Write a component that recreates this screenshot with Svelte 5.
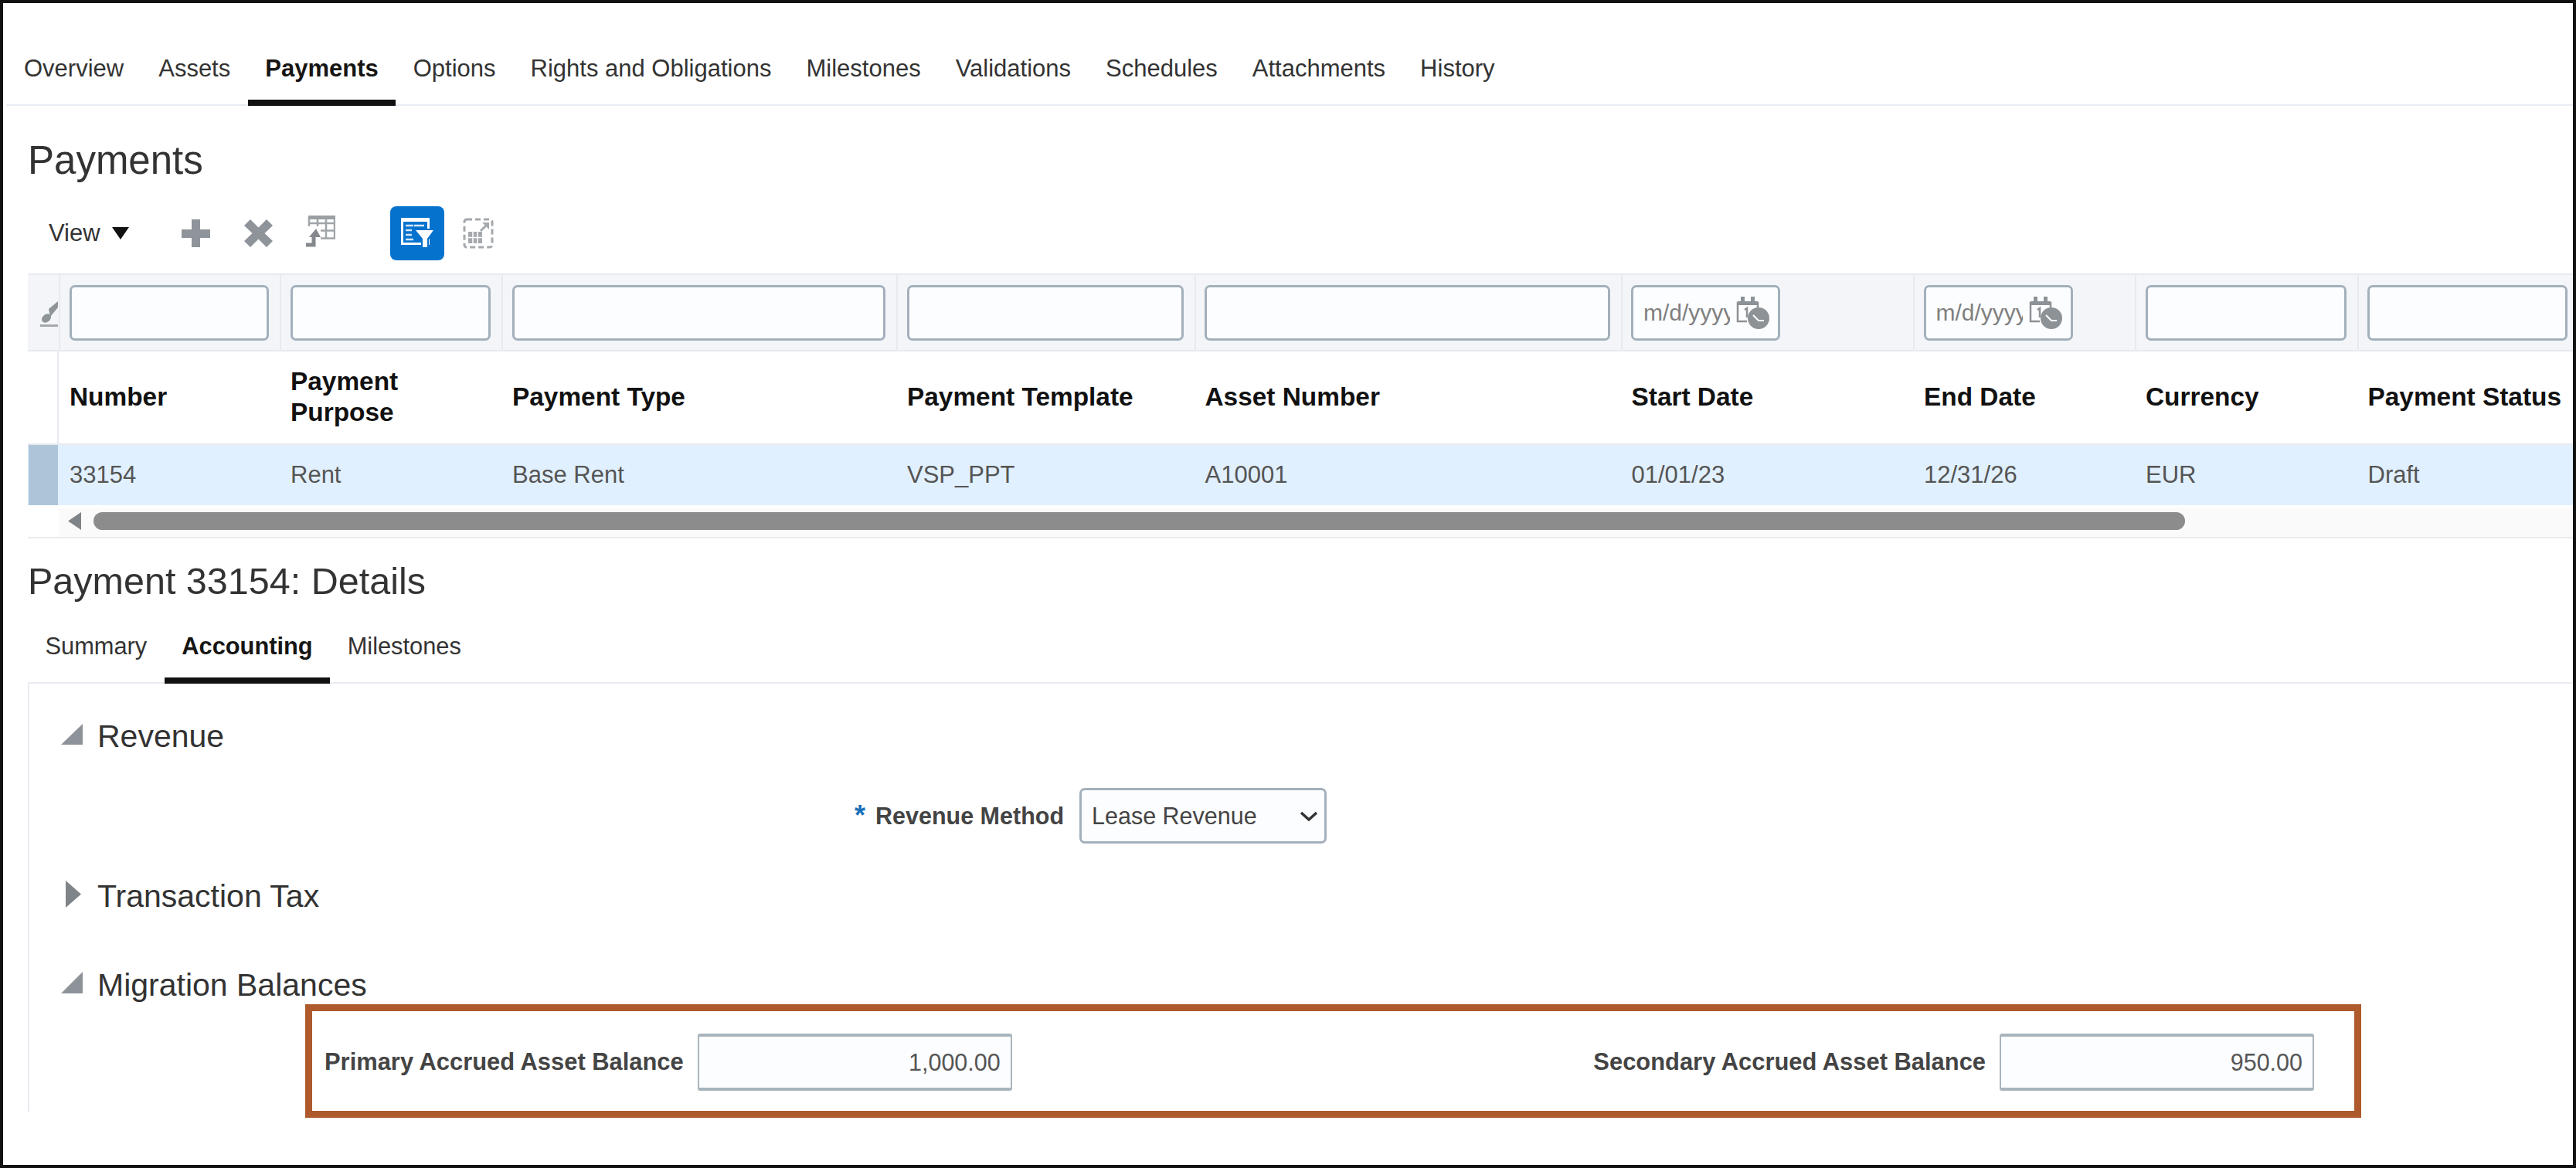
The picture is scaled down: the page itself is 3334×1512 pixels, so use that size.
<script>
	const filters = ['text', 'text', 'text', 'text', 'text', 'date', 'date', 'text', 'text'];
	const columns = [
		'Number',
		'Payment Purpose',
		'Payment Type',
		'Payment Template',
		'Asset Number',
		'Start Date',
		'End Date',
		'Currency',
		'Payment Status'
	];
	const row = ['33154', 'Rent', 'Base Rent', 'VSP_PPT', 'A10001', '01/01/23', '12/31/26', 'EUR', 'Draft'];
	const tabs = [
		'Overview',
		'Assets',
		'Payments',
		'Options',
		'Rights and Obligations',
		'Milestones',
		'Validations',
		'Schedules',
		'Attachments',
		'History'
	];
	const subTabs = ['Summary', 'Accounting', 'Milestones'];
</script>

<div class="frame">
	<nav class="tabs">
		{#each tabs as tab}
			<div class="tab" class:active={tab === 'Payments'}>{tab}</div>
		{/each}
	</nav>

	<main class="content">
		<h1 class="title">Payments</h1>

		<div class="toolbar">
			<span class="view">View</span>
			<svg class="caret" width="24" height="16" viewBox="0 0 24 16"><path d="M1 0H23L12 16Z" fill="#111" /></svg>
			<svg class="plus" width="37" height="36" viewBox="0 0 37 36">
				<path d="M13 0H24V13H37V24H24V36H13V24H0V13H13Z" fill="#8e9499" />
			</svg>
			<svg class="cross" width="37" height="36" viewBox="0 0 37 36">
				<path d="M8 0L18.500 10.500L29 0L37 8L26.500 18L37 28L29 36L18.500 25.500L8 36L0 28L10.500 18L0 8Z" fill="#8e9499" />
			</svg>
			<svg class="import" width="40" height="41" viewBox="0 0 40 41">
				<g fill="none" stroke="#a0a5a9" stroke-width="2.500">
					<rect x="6" y="1.500" width="33" height="28" />
					<path d="M6 10H39M6 19.500H39M17 1.500V29.500M28 1.500V29.500" />
				</g>
				<rect x="6" y="0" width="34" height="5" fill="#9a9fa3" />
				<rect x="2" y="14" width="19" height="27" fill="#fff" />
				<path d="M2 38H12V26" fill="none" stroke="#85898d" stroke-width="5" />
				<path d="M15 17L6 28H21Z" fill="#85898d" />
			</svg>
			<div class="filter-btn">
				<svg width="70" height="70" viewBox="0 0 70 70">
					<rect x="15.500" y="16.500" width="34" height="32" fill="none" stroke="#fff" stroke-width="3" />
					<rect x="14" y="15" width="37" height="5" fill="#fff" />
					<path d="M20 25H30M20 31H28M20 37H28M20 43H30M31 25H44" stroke="#d5e6f7" stroke-width="2.500" />
					<path d="M30 29H60L50 43V56H40V43Z" fill="#0572ce" />
					<path d="M33 31H56L48 42V53H42V42Z" fill="#fff" />
				</svg>
			</div>
			<svg class="expand" width="40" height="40" viewBox="0 0 40 40">
				<rect x="2" y="2" width="36" height="36" rx="3" fill="none" stroke="#a5a9ad" stroke-width="3" stroke-dasharray="7 4" />
				<rect x="7" y="18" width="18" height="15" fill="#a5a9ad" />
				<path d="M13 18V33M19 18V33M7 25.500H25" stroke="#fff" stroke-width="1.500" />
				<path d="M23 17L31 9" stroke="#a5a9ad" stroke-width="3" />
				<path d="M25 6H34V15Z" fill="#a5a9ad" />
			</svg>
		</div>

		<div class="table">
			<div class="grid filter-row">
				<div class="cell first">
					<svg class="eraser" width="23" height="35" viewBox="0 0 23 35">
						<path d="M11 12L23 2V10L13 22Z" fill="#8f9498" />
						<ellipse cx="8" cy="24" rx="6.500" ry="5" transform="rotate(-40 8 24)" fill="#8f9498" />
						<rect x="0" y="32" width="23" height="3" fill="#a5a9ad" />
					</svg>
				</div>
				{#each filters as kind}
					<div class="cell">
						{#if kind === 'date'}
							<div class="field date">
								<input class="date-input" placeholder="m/d/yyyy" />
								<svg width="43" height="42" viewBox="0 0 43 42">
									<g fill="none" stroke="#8d9296" stroke-width="2.500">
										<path d="M14 32H2V8H28V14" />
									</g>
									<path d="M2 6H28V11H2Z" fill="#8d9296" />
									<rect x="6" y="0" width="5" height="8" fill="#8d9296" />
									<rect x="19" y="0" width="5" height="8" fill="#8d9296" />
									<path d="M11 17L14 15V27" fill="none" stroke="#8d9296" stroke-width="2.500" />
									<circle cx="29" cy="28" r="14" fill="#8d9296" />
									<path d="M22 24L29 31H36" fill="none" stroke="#fff" stroke-width="2" />
								</svg>
							</div>
						{:else}
							<input class="field" />
						{/if}
					</div>
				{/each}
			</div>

			<div class="grid head-row">
				<div class="cell first"></div>
				{#each columns as col}
					<div class="cell head">{col}</div>
				{/each}
			</div>

			<div class="grid data-row">
				<div class="cell first selected"></div>
				{#each row as value}
					<div class="cell value">{value}</div>
				{/each}
			</div>

			<div class="scroll-wrap">
				<div class="scroll-row">
					<svg width="17" height="23" viewBox="0 0 17 23"><path d="M17 0V23L0 11.500Z" fill="#7f8488" /></svg>
					<div class="thumb"></div>
				</div>
			</div>
		</div>

		<h2 class="details-title">Payment 33154: Details</h2>

		<nav class="sub-tabs">
			{#each subTabs as tab}
				<div class="sub-tab" class:active={tab === 'Accounting'}>{tab}</div>
			{/each}
		</nav>

		<section class="panel">
			<div class="section-head">
				<span class="arrow">
					<svg width="28" height="27" viewBox="0 0 28 27"><path d="M28 0V27H0Z" fill="#8d9399" /></svg>
				</span>
				Revenue
			</div>

			<div class="method-row">
				<span class="star">*</span>
				<span class="method-label">Revenue Method</span>
				<div class="select">
					Lease Revenue
					<svg width="24" height="13" viewBox="0 0 24 13">
						<path d="M2 2L12 11L22 2" fill="none" stroke="#333" stroke-width="3.500" />
					</svg>
				</div>
			</div>

			<div class="section-head tax">
				<span class="arrow closed">
					<svg width="20" height="35" viewBox="0 0 20 35"><path d="M0 0L20 17.500L0 35Z" fill="#7f8488" /></svg>
				</span>
				Transaction Tax
			</div>

			<div class="section-head migration">
				<span class="arrow">
					<svg width="28" height="28" viewBox="0 0 28 28"><path d="M28 0V28H0Z" fill="#8d9399" /></svg>
				</span>
				Migration Balances
			</div>

			<div class="balances">
				<div class="balance">
					<span class="balance-label">Primary Accrued Asset Balance</span>
					<div class="amount">1,000.00</div>
				</div>
				<div class="balance">
					<span class="balance-label">Secondary Accrued Asset Balance</span>
					<div class="amount">950.00</div>
				</div>
			</div>
		</section>
	</main>
</div>

<style>
	:global(body) {
		margin: 0;
		background: #fff;
	}

	.frame {
		box-sizing: border-box;
		width: 3334px;
		height: 1512px;
		border: 4px solid #111;
		overflow: hidden;
		font-family: 'Liberation Sans', Arial, sans-serif;
		color: #333;
		background: #fff;
	}

	/* top tabs */
	.tabs {
		display: flex;
		margin-left: 4px;
		padding-top: 67px;
		border-bottom: 2px solid #e8ecf2;
	}

	.tab {
		padding: 0 22.500px 22px;
		margin-bottom: -2px;
		border-bottom: 8px solid transparent;
		font-size: 31px;
		line-height: 36px;
		white-space: nowrap;
	}

	.tab:first-child {
		padding-left: 23px;
	}

	.tab.active {
		border-bottom-color: #111;
		font-weight: 700;
		color: #161513;
	}

	.content {
		padding-left: 32px;
	}

	.title {
		margin: 41px 0 0;
		font-size: 51px;
		font-weight: 400;
		line-height: 60px;
	}

	/* toolbar */
	.toolbar {
		display: flex;
		align-items: center;
		height: 70px;
		margin-top: 29px;
		padding-left: 27px;
	}

	.view {
		font-size: 31px;
		width: 81px;
	}

	.plus {
		margin-left: 67px;
	}

	.cross {
		margin-left: 44px;
	}

	.import {
		margin-left: 41px;
		margin-top: -6px;
	}

	.filter-btn {
		width: 70px;
		height: 70px;
		margin-left: 71px;
		border-radius: 8px;
		background: #0572ce;
	}

	.filter-btn svg,
	.eraser {
		display: block;
	}

	.expand {
		margin-left: 24px;
	}

	/* table */
	.table {
		margin-top: 17px;
	}

	.grid {
		display: grid;
		grid-template-columns: 40px 286px 287px 511px 385.5px 552px 378.5px 287px 287.5px 1fr;
	}

	.filter-row {
		box-sizing: border-box;
		height: 101px;
		background: #f3f5f9;
		border-top: 2px solid #e6eaf0;
		border-bottom: 2px solid #e6eaf0;
	}

	.filter-row .cell {
		display: flex;
		align-items: center;
		padding: 0 14px 0 11.500px;
		border-left: 2px solid #e6eaf0;
	}

	.filter-row .cell:last-child {
		padding-right: 7px;
	}

	.filter-row .cell.first {
		padding: 32px 0 0 16px;
		border-left: 0;
		align-items: flex-start;
	}

	.field {
		box-sizing: border-box;
		width: 100%;
		height: 72px;
		padding: 0;
		border: 3px solid #a3b0bb;
		border-radius: 7px;
		background: #fcfdfe;
		outline: none;
	}

	.field.date {
		display: flex;
		align-items: center;
		gap: 8px;
		width: 193px;
		padding-left: 13px;
	}

	.date-input {
		width: 112px;
		padding: 0;
		border: 0;
		background: none;
		outline: none;
		font-family: inherit;
		font-size: 30px;
	}

	.date-input::placeholder {
		color: #808080;
		opacity: 1;
	}

	.head-row {
		height: 121px;
		border-bottom: 2px solid #e6eaf0;
		box-sizing: border-box;
	}

	.head-row .first {
		border-right: 2px solid #e6eaf0;
	}

	.head {
		display: flex;
		align-items: center;
		padding: 0 10px 1px 14px;
		font-size: 33.400px;
		font-weight: 700;
		line-height: 40px;
		color: #111;
	}

	.data-row {
		height: 78px;
		background: #e1f0fe;
	}

	.selected {
		background: #aec5d9;
		margin: 0 1px;
	}

	.value {
		display: flex;
		align-items: center;
		padding-left: 14px;
		font-size: 31px;
		color: #555;
	}

	.scroll-wrap {
		border-bottom: 2px solid #e8ecf0;
	}

	.scroll-row {
		display: flex;
		align-items: center;
		box-sizing: border-box;
		height: 41px;
		margin-left: 40px;
		padding: 0 0 0 12px;
		gap: 16px;
		background: linear-gradient(#fff 4px, #fafafa 4px);
	}

	.thumb {
		width: 2707px;
		height: 23px;
		border-radius: 12px;
		background: #8c8c8c;
	}

	/* details */
	.details-title {
		margin: 25px 0 0;
		font-size: 48.500px;
		font-weight: 400;
		line-height: 60px;
	}

	.sub-tabs {
		display: flex;
		padding-top: 37px;
		border-bottom: 2px solid #e8ecf2;
	}

	.sub-tab {
		padding: 0 22.500px 22px;
		margin-bottom: -2px;
		border-bottom: 8px solid transparent;
		font-size: 30.800px;
		line-height: 36px;
	}

	.sub-tab.active {
		border-bottom-color: #111;
		font-weight: 700;
		color: #161513;
	}

	.panel {
		box-sizing: border-box;
		height: 555px;
		padding-top: 44px;
		border-left: 2px solid #e8ecf2;
	}

	.section-head {
		display: flex;
		align-items: center;
		height: 48px;
		padding-left: 41px;
		font-size: 41px;
		color: #333;
	}

	.arrow {
		display: flex;
		width: 47px;
		flex: none;
		margin-top: -6px;
	}

	.arrow.closed {
		padding-left: 6px;
		width: 41px;
	}

	.tax {
		margin-top: 46px;
	}

	.migration {
		margin-top: 67px;
	}

	.method-row {
		display: flex;
		align-items: center;
		height: 72px;
		margin-top: 43px;
		margin-bottom: -2px;
		padding-left: 1068px;
	}

	.star {
		align-self: flex-start;
		width: 27px;
		margin-top: 18px;
		font-size: 36px;
		font-weight: 700;
		line-height: 36px;
		color: #1a6fb8;
	}

	.method-label {
		width: 264px;
		font-size: 30.500px;
		font-weight: 700;
		color: #444;
	}

	.select {
		display: flex;
		align-items: center;
		justify-content: space-between;
		box-sizing: border-box;
		width: 320px;
		height: 72px;
		padding: 0 8px 0 13px;
		border: 3px solid #a3b0bb;
		border-radius: 7px;
		background: #fcfdfe;
		font-size: 30.500px;
		color: #444;
	}

	.balances {
		display: flex;
		align-items: center;
		justify-content: space-between;
		box-sizing: border-box;
		width: 2661px;
		height: 147px;
		margin: 1px 0 0 357px;
		padding: 3px 52px 0 16px;
		border: 9px solid #ae5a2c;
		background: #fff;
	}

	.balance {
		display: flex;
		align-items: center;
		gap: 18px;
	}

	.balance-label {
		font-size: 30.900px;
		font-weight: 700;
		color: #444;
	}

	.amount {
		box-sizing: border-box;
		width: 407px;
		height: 74px;
		padding-right: 13px;
		border: solid #a9b5bd;
		border-width: 4px 2px;
		border-radius: 3px;
		background: #fbfdfe;
		font-size: 30.500px;
		line-height: 66px;
		text-align: right;
		color: #555;
	}
</style>
